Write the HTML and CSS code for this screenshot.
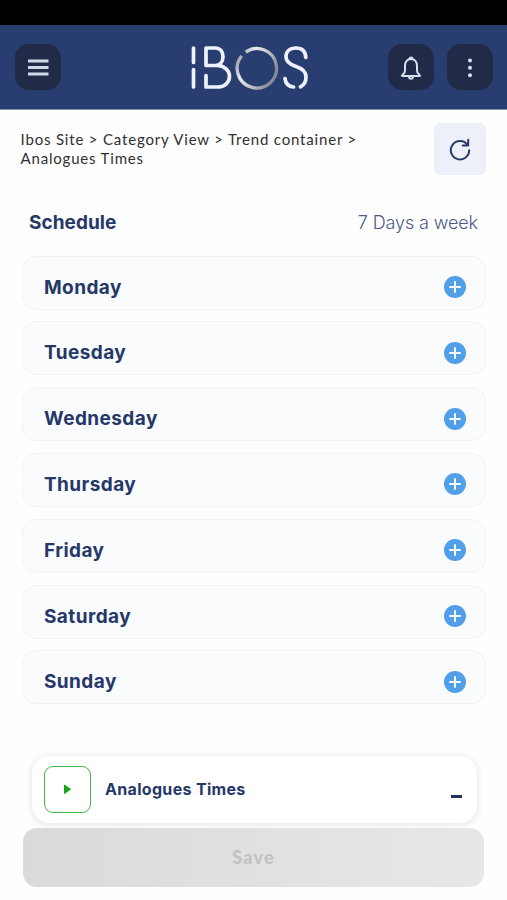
FILE: index.html
```html
<!DOCTYPE html>
<html lang="en">
<head>
<meta charset="utf-8">
<meta name="viewport" content="width=device-width, initial-scale=1">
<title>IBOS Schedule</title>
<link rel="stylesheet" href="styles.css">
</head>
<body>
<div class="status-bar"></div>
<header class="header">
  <button class="nav-button" aria-label="Menu"><svg width="46" height="46" fill="none" stroke="#cfd9ea" stroke-width="3.2"><path d="M13 17h20.500M13 23.500h20.500M13 30h20.500"/></svg></button>
  <svg class="logo" width="120" height="48" viewBox="0 0 120 48" fill="none" stroke="#edf1fb" stroke-width="3.7" stroke-linecap="round" stroke-linejoin="round" aria-label="IBOS">
    <defs><linearGradient id="ring" x1="0" y1="0" x2="1" y2="0.5"><stop offset="0" stop-color="#777d89"/><stop offset=".35" stop-color="#e8ebed"/><stop offset=".65" stop-color="#c4c9cf"/><stop offset="1" stop-color="#858b97"/></linearGradient></defs>
    <path d="M3.500 5v14.500M3.500 26.500v17.500M16 5v17.500M16 5h9c5 0 8 3.500 8 8.500s-3 9-8 9h-9M27 22.500c7 0 12.500 4.500 12.500 10.800s-5 10.700-12 10.700H16V32.500"/>
    <path stroke="url(#ring)" stroke-width="3.3" stroke-linecap="butt" d="M55.600 9.100A19.700 19.700 0 1 1 51.600 12.800"/>
    <path d="M115.800 14.500C115.500 8.500 112 5 106 5c-6 0-10 3.400-10 8.800 0 5.600 4 7.700 9.500 9.500 6.500 2.100 10.500 4.700 10.500 10.500 0 5-2.300 8.400-5.500 10M103.500 44c-5-.5-8-3.500-8.500-8.500"/>
  </svg>
  <div class="header-actions">
    <button class="nav-button" aria-label="Notifications"><svg width="46" height="46" fill="none" stroke="#d9e0eb" stroke-width="2" stroke-linecap="round" stroke-linejoin="round"><path d="M14 32c0-2 3-1.500 3-5.500v-4.500c0-4.200 2.300-7 6-7s6 2.800 6 7v4.500c0 4 3 3.500 3 5.500zM21.500 14.700c.2-1.700 2.800-1.700 3 0M21 33c.4 2.300 3.600 2.300 4 0"/></svg></button>
    <button class="nav-button" aria-label="More"><svg width="46" height="46" fill="#d9e0eb"><circle cx="23" cy="16.500" r="2"/><circle cx="23" cy="23.800" r="2"/><circle cx="23" cy="31.200" r="2"/></svg></button>
  </div>
</header>
<main class="page">
  <div class="crumb-row">
    <nav class="crumbs">Ibos Site &gt; Category View &gt; Trend container &gt;<br>Analogues Times</nav>
    <button class="refresh" aria-label="Refresh"><svg width="52" height="52" fill="none" stroke="#2a3a68" stroke-width="2" stroke-linecap="round" stroke-linejoin="round"><path d="M33.700 22.200A9.200 9.200 0 1 0 35.200 27.300M34.200 16.800v5.600h-5.500"/></svg></button>
  </div>
  <div class="title-row"><h1 class="title">Schedule</h1><span class="frequency">7 Days a week</span></div>
  <section class="days">
    <div class="day"><span class="day-name">Monday</span><svg class="plus" viewBox="0 0 22 22"><circle cx="11" cy="11" r="11"/><path d="M6 11h10M11 6v10"/></svg></div>
    <div class="day"><span class="day-name">Tuesday</span><svg class="plus" viewBox="0 0 22 22"><circle cx="11" cy="11" r="11"/><path d="M6 11h10M11 6v10"/></svg></div>
    <div class="day"><span class="day-name">Wednesday</span><svg class="plus" viewBox="0 0 22 22"><circle cx="11" cy="11" r="11"/><path d="M6 11h10M11 6v10"/></svg></div>
    <div class="day"><span class="day-name">Thursday</span><svg class="plus" viewBox="0 0 22 22"><circle cx="11" cy="11" r="11"/><path d="M6 11h10M11 6v10"/></svg></div>
    <div class="day"><span class="day-name">Friday</span><svg class="plus" viewBox="0 0 22 22"><circle cx="11" cy="11" r="11"/><path d="M6 11h10M11 6v10"/></svg></div>
    <div class="day"><span class="day-name">Saturday</span><svg class="plus" viewBox="0 0 22 22"><circle cx="11" cy="11" r="11"/><path d="M6 11h10M11 6v10"/></svg></div>
    <div class="day"><span class="day-name">Sunday</span><svg class="plus" viewBox="0 0 22 22"><circle cx="11" cy="11" r="11"/><path d="M6 11h10M11 6v10"/></svg></div>
  </section>
  <section class="point">
    <span class="play"><svg width="44" height="44"><path d="M19.500 18v8.500l6-4.250z" fill="#18a51d" stroke="#18a51d" stroke-linejoin="round"/></svg></span>
    <span class="point-name">Analogues Times</span>
    <span class="dash"></span>
  </section>
  <button class="save">Save</button>
</main>
</body>
</html>
```
FILE: styles.css
```css
* { box-sizing: border-box; }
body { margin: 0; background: #fefefe; font-family: Inter, "Liberation Sans", sans-serif; color: #253868; }
button { border: 0; padding: 0; font-family: inherit; }
svg { display: block; }
.status-bar { height: 25px; background: #000; }
.header { height: 85px; background: #293e70; border-bottom: 1px solid #8490ad; display: flex; align-items: center; padding: 0 14px 0 15px; }
.nav-button { width: 46px; height: 46px; border-radius: 14px; background: #212b47; }
.logo { margin-left: 128.5px; }
.header-actions { display: flex; gap: 13px; margin-left: auto; }
.page { padding: 13px 21px 0; }
.crumb-row { display: flex; justify-content: space-between; height: 52px; }
.crumbs { font: 15px/19px Lato, sans-serif; letter-spacing: 0.82px; color: #303030; padding-top: 7px; margin-left: -0.5px; white-space: nowrap; }
.refresh { width: 52px; height: 52px; border-radius: 6px; background: #edf0f8; }
.title-row { display: flex; justify-content: space-between; align-items: center; height: 30px; margin-top: 32px; padding: 0 8px; }
.title { font-size: 19px; font-weight: 700; margin: 0; letter-spacing: 0.05px; }
.frequency { font-size: 18px; font-weight: 300; letter-spacing: -0.12px; color: #4c5a88; }
.days { margin: 18.6px 0 0 1px; display: grid; grid-auto-rows: 54px; gap: 11.8px; }
.day { border: 1px solid #f1f3f6; border-radius: 14px; background: #f9fbfd; display: flex; align-items: center; justify-content: space-between; padding: 9px 19px 0 21px; }
.day-name { font-size: 19px; font-weight: 700; letter-spacing: 0.42px; }
.plus { width: 22px; height: 22px; fill: #529fe9; }
.plus path { stroke: #f5faff; stroke-width: 2; stroke-linecap: round; }
.point { margin: 51.6px 9px 0 11px; height: 67px; border-radius: 17px; background: #fff; box-shadow: 0 1px 6px 1px #00000018; display: flex; align-items: center; padding: 0 15px 0 12px; }
.play { width: 47px; height: 47px; border: 1.5px solid #43b847; border-radius: 9px; }
.point-name { margin-left: 14px; font-size: 16px; font-weight: 700; letter-spacing: 0.32px; }
.dash { margin: 14px 0 0 auto; width: 11px; height: 3px; background: #26345f; }
.save { display: block; position: relative; width: 461px; height: 59px; margin: 5px 0 0 2px; border-radius: 14px; background: linear-gradient(90deg, #dadada, #e7e7e7); color: #c2c2c2; font: 900 18px Lato, sans-serif; letter-spacing: 1.2px; }
```
